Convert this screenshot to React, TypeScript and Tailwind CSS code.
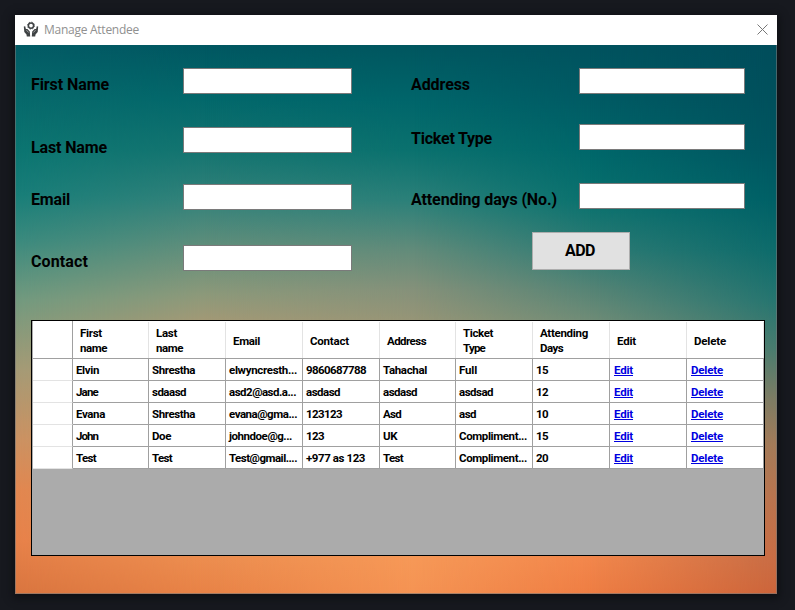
import { useLayoutEffect, useRef, useState } from "react";

const columns = [
  { title: "First name", lines: [["First", 22], ["name", 27]], width: "w-[76px]" },
  { title: "Last name", lines: [["Last", 21], ["name", 27]], width: "w-[77px]" },
  { title: "Email", lines: [["Email", 27]], width: "w-[77px]" },
  { title: "Contact", lines: [["Contact", 39]], width: "w-[77px]" },
  { title: "Address", lines: [["Address", 39]], width: "w-[76px]" },
  { title: "Ticket Type", lines: [["Ticket", 30], ["Type", 22]], width: "w-[77px]" },
  { title: "Attending Days", lines: [["Attending", 48], ["Days", 23]], width: "w-[77px]" },
  { title: "Edit", lines: [["Edit", 19]], width: "w-[77px]" },
  { title: "Delete", lines: [["Delete", 32]], width: "w-[77px]" },
] as { title: string; lines: [string, number][]; width: string }[];

const rows: [string, number][][] = [
  [["Elvin", 23], ["Shrestha", 43], ["elwyncresth...", 68], ["9860687788", 60], ["Tahachal", 44], ["Full", 18], ["15", 12]],
  [["Jane", 22], ["sdaasd", 34], ["asd2@asd.a...", 67], ["asdasd", 34], ["asdasd", 34], ["asdsad", 34], ["12", 12]],
  [["Evana", 29], ["Shrestha", 43], ["evana@gma...", 68], ["123123", 36], ["Asd", 18], ["asd", 17], ["10", 12]],
  [["John", 22], ["Doe", 19], ["johndoe@g...", 63], ["123", 18], ["UK", 14], ["Compliment...", 68], ["15", 12]],
  [["Test", 20], ["Test", 20], ["Test@gmail....", 68], ["+977 as 123", 59], ["Test", 20], ["Compliment...", 68], ["20", 12]],
];

/* Text whose letter spacing is tuned so that it spans a given width. */
function Fit({ text, width, className = "" }: { text: string; width: number; className?: string }) {
  const ref = useRef<HTMLSpanElement>(null);
  const [spacing, setSpacing] = useState(0);
  useLayoutEffect(() => {
    const natural = ref.current!.getBoundingClientRect().width;
    setSpacing((width - natural) / text.length);
  }, [text, width]);
  return (
    <span ref={ref} className={`inline-block whitespace-pre ${className}`} style={{ letterSpacing: spacing }}>
      {text}
    </span>
  );
}

function Label({ text, width, className }: { text: string; width: number; className: string }) {
  return (
    <label className={`block h-5 text-[16px] leading-[21px] font-bold text-black ${className}`}>
      <Fit text={text} width={width} />
    </label>
  );
}

function Field({ label, className }: { label: string; className: string }) {
  return <input aria-label={label} className={`block h-[26px] border border-[#7a7a7a] bg-white outline-none ${className}`} />;
}

function Backdrop() {
  return (
    <>
      <div className="[grid-area:1/1] bg-[linear-gradient(#035b65_0px,#07696b_55px,#0b7571_105px,#187e79_150px,#3a8a7e_195px,#729a7f_255px,#a59b76_325px,#cc9262_395px,#e28750_445px,#e8824a_495px,#d9753f_550px)]" />
      <div className="[grid-area:1/1] bg-[linear-gradient(#005761_0px,#03686b_55px,#147470_105px,#34827a_155px,#648f7b_205px,#8d997a_250px,#a29976_275px,#ec8d4f_515px,#e88246_550px)] [mask-image:linear-gradient(to_right,transparent_0px,black_190px)]" />
      <div className="[grid-area:1/1] bg-[linear-gradient(#00565f_0px,#00656a_55px,#0a716e_105px,#2b8079_155px,#628b7a_205px,#85917a_245px,#969577_275px,#f69857_515px,#f59353_550px)] [mask-image:linear-gradient(to_right,transparent_190px,black_400px)]" />
      <div className="[grid-area:1/1] bg-[linear-gradient(#00525e_0px,#005b64_55px,#00676a_105px,#09716e_155px,#2e7b74_205px,#568475_245px,#6f8c77_275px,#f2864b_515px,#ee7d43_550px)] [mask-image:linear-gradient(to_right,transparent_400px,black_575px)]" />
      <div className="[grid-area:1/1] bg-[linear-gradient(#004d5b_0px,#00505c_55px,#005560_105px,#006066_155px,#0d6b6b_205px,#257570_255px,#497b6e_305px,#7d7b63_355px,#a37a58_400px,#b9734e_455px,#c86c44_515px,#cc643a_550px)] [mask-image:linear-gradient(to_right,transparent_575px,black_762px)]" />
    </>
  );
}

function HandsIcon() {
  return (
    <svg viewBox="0 0 16 16" className="size-4 -translate-y-px" fill="none" stroke="#404345">
      <circle cx="8" cy="4.6" r="2.6" strokeWidth="1.5" />
      <circle cx="8" cy="4.6" r="3.5" strokeWidth=".9" strokeDasharray="1.3 1.45" />
      <path
        d="M.8 5.6l1.4-.3.7 2.6 1.5.2 2.4 2.5.4 4.9H3.8l-.3-2L1.3 11zM15.2 5.6l-1.4-.3-.7 2.6-1.5.2-2.4 2.5-.4 4.9h3.4l.3-2 2.2-2.5z"
        fill="#404345"
        stroke="none"
      />
      <path d="M3.5 9.2l2.1 2.3M12.5 9.2l-2.1 2.3" stroke="#fff" strokeWidth=".5" />
    </svg>
  );
}

function AttendeeTable() {
  return (
    <div className="mt-[49px] ml-4 h-[236px] w-[734px] border border-black bg-[#ababab] text-[11.5px] font-bold text-black">
      <div className="ml-px flex h-[38px] w-[731px] border-b border-[#a0a0a0] bg-white">
        <div className="w-10 border-r border-[#a0a0a0]" />
        {columns.map((column) => (
          <div key={column.title} className={`flex shrink-0 flex-col pt-px ${column.width}`}>
            <div className="flex flex-1 flex-col justify-center border-r border-[#e3e3e3] pt-[2px] pl-[7px] leading-[15px]">
              {column.lines.map(([text, width]) => (
                <div key={text} className="h-[15px]">
                  <Fit text={text} width={width} />
                </div>
              ))}
            </div>
          </div>
        ))}
      </div>
      {rows.map((row, index) => (
        <div key={index} className="ml-px flex h-[22px] w-[731px] bg-white leading-[22px]">
          <div className="w-10 shrink-0 border-r border-b border-r-[#a0a0a0] border-b-[#e3e3e3]" />
          {row.map(([text, width], cell) => (
            <div key={cell} className={`shrink-0 overflow-hidden border-r border-b border-[#a0a0a0] pl-[3px] ${columns[cell].width}`}>
              <Fit text={text} width={width} />
            </div>
          ))}
          {["Edit", "Delete"].map((action) => (
            <div key={action} className="w-[77px] shrink-0 border-r border-b border-[#a0a0a0] pl-1">
              <a className="text-[#0000e0]">
                <Fit text={action} width={action === "Edit" ? 19 : 32} className="underline decoration-1 underline-offset-1" />
              </a>
            </div>
          ))}
        </div>
      ))}
    </div>
  );
}

export default function App() {
  return (
    <div className="h-[610px] w-[795px] overflow-hidden bg-[#17191f] pt-[15px] pl-[15px] font-['Roboto','Liberation_Sans',sans-serif]">
      <div className="flex h-[579px] w-[762px] flex-col shadow-[0_2px_8px_2px_#0e0f13]">
        <header className="flex h-[30px] shrink-0 items-center bg-white pl-2">
          <HandsIcon />
          <h1 className="ml-[5px] font-['Open_Sans',sans-serif] text-[12px] text-[#909090]">
            <Fit text="Manage Attendee" width={95} />
          </h1>
          <svg viewBox="0 0 11 11" className="mr-[9px] ml-auto size-[11px] -translate-y-px" stroke="#777" fill="none">
            <path d="M.5 .5l10 10M10.5 .5l-10 10" />
          </svg>
        </header>
        <main className="grid h-[549px] grid-cols-1 grid-rows-1">
          <Backdrop />
          <div className="z-10 border-r border-b border-l border-[#777777]/60 [grid-area:1/1]">
            <div className="-ml-px flex h-[226px]">
              <div className="ml-4 w-[152px] pt-[29px]">
                <Label text="First Name" width={78} className="" />
                <Label text="Last Name" width={76} className="mt-[43px]" />
                <Label text="Email" width={39} className="mt-8" />
                <Label text="Contact" width={57} className="mt-[42px]" />
              </div>
              <div className="w-[228px] pt-[23px]">
                <Field label="First Name" className="w-[169px]" />
                <Field label="Last Name" className="mt-[33px] w-[169px]" />
                <Field label="Email" className="mt-[31px] w-[169px]" />
                <Field label="Contact" className="mt-[35px] w-[169px]" />
              </div>
              <div className="pt-[23px]">
                <div className="flex">
                  <div className="w-[168px] pt-[6px]">
                    <Label text="Address" width={59} className="" />
                    <Label text="Ticket Type" width={81} className="mt-[34px]" />
                    <Label text="Attending days (No.)" width={146} className="mt-[41px]" />
                  </div>
                  <div>
                    <Field label="Address" className="w-[166px]" />
                    <Field label="Ticket Type" className="mt-[30px] w-[166px]" />
                    <Field label="Attending days" className="mt-[33px] w-[166px]" />
                  </div>
                </div>
                <button className="mt-[23px] ml-[121px] flex h-[38px] w-[98px] items-center justify-center border border-[#adadad] bg-[#e1e1e1] text-[16px] font-bold text-black">
                  <Fit text="ADD" width={30} className="-ml-[2px]" />
                </button>
              </div>
            </div>
            <div className="-ml-px">
              <AttendeeTable />
            </div>
          </div>
        </main>
      </div>
    </div>
  );
}
